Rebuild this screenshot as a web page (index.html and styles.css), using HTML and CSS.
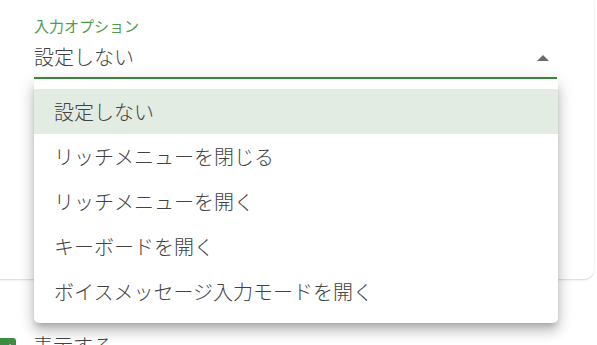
FILE: index.html
```html
<!DOCTYPE html>
<html lang="ja">
<head>
<meta charset="utf-8">
<link rel="stylesheet" href="styles.css">
</head>
<body>
<div class="page">
  <div class="card">
    <div class="field">
      <div class="label">入力オプション</div>
      <div class="select">
        <span class="value">設定しない</span>
        <svg class="arrow" width="12" height="6" viewBox="0 0 12 6"><path d="M0 6 L6 0 L12 6 Z" fill="#6b6b6b"/></svg>
      </div>
      <ul class="menu">
        <li class="item active">設定しない</li>
        <li class="item">リッチメニューを閉じる</li>
        <li class="item">リッチメニューを開く</li>
        <li class="item">キーボードを開く</li>
        <li class="item">ボイスメッセージ入力モードを開く</li>
      </ul>
    </div>
  </div>
  <div class="check-row">
    <span class="checkbox"><svg width="22" height="22" viewBox="0 0 22 22"><path d="M5 11.5 L9 15.5 L17 7" fill="none" stroke="#fff" stroke-width="2.6"/></svg></span>
    <span class="check-label">表示する</span>
  </div>
</div>
</body>
</html>
```
FILE: styles.css
```css
html, body {
  margin: 0;
  padding: 0;
  background: #fff;
}
body {
  width: 597px;
  height: 345px;
  overflow: hidden;
  font-family: "Noto Sans CJK JP", "Noto Sans", sans-serif;
  font-weight: 300;
  color: #424242;
}
.page {
  width: 597px;
  height: 345px;
  overflow: hidden;
}
.card {
  margin-left: -20px;
  width: 614px;
  height: 279px;
  box-sizing: border-box;
  padding-left: 54px;
  padding-top: 17px;
  border-radius: 0 0 10px 10px;
  box-shadow: 0 1px 2px rgba(0, 0, 0, 0.16);
  background: #fff;
}
.field {
  position: relative;
  width: 523px;
}
.label {
  font-size: 15px;
  line-height: 18px;
  font-weight: 400;
  color: #4b9e50;
}
.select {
  display: flex;
  align-items: center;
  justify-content: space-between;
  padding: 12px 0 10px;
  border-bottom: 2px solid #3b8d3f;
}
.value {
  font-size: 20px;
  line-height: 20px;
}
.arrow {
  margin-right: 8px;
  margin-top: 2px;
}
.menu {
  position: absolute;
  top: 100%;
  left: 0;
  width: 524px;
  margin: 0;
  padding: 10px 0 9px;
  list-style: none;
  background: #fff;
  border-radius: 5px;
  box-shadow: 0 5px 6px -3px rgba(0, 0, 0, 0.2), 0 9px 12px 1px rgba(0, 0, 0, 0.14), 0 3px 16px 2px rgba(0, 0, 0, 0.12);
}
.item {
  height: 45px;
  line-height: 45px;
  padding-left: 20px;
  font-size: 20px;
  white-space: nowrap;
}
.item.active {
  background: #e3ece3;
}
.check-row {
  display: flex;
  align-items: flex-start;
  margin-top: 55px;
}
.checkbox {
  display: block;
  width: 22px;
  height: 22px;
  margin-left: -6px;
  margin-top: 4px;
  border-radius: 3px;
  background: #3b8d3f;
}
.checkbox svg {
  display: block;
}
.check-label {
  margin-left: 17px;
  font-size: 20px;
  line-height: 24px;
}
```
